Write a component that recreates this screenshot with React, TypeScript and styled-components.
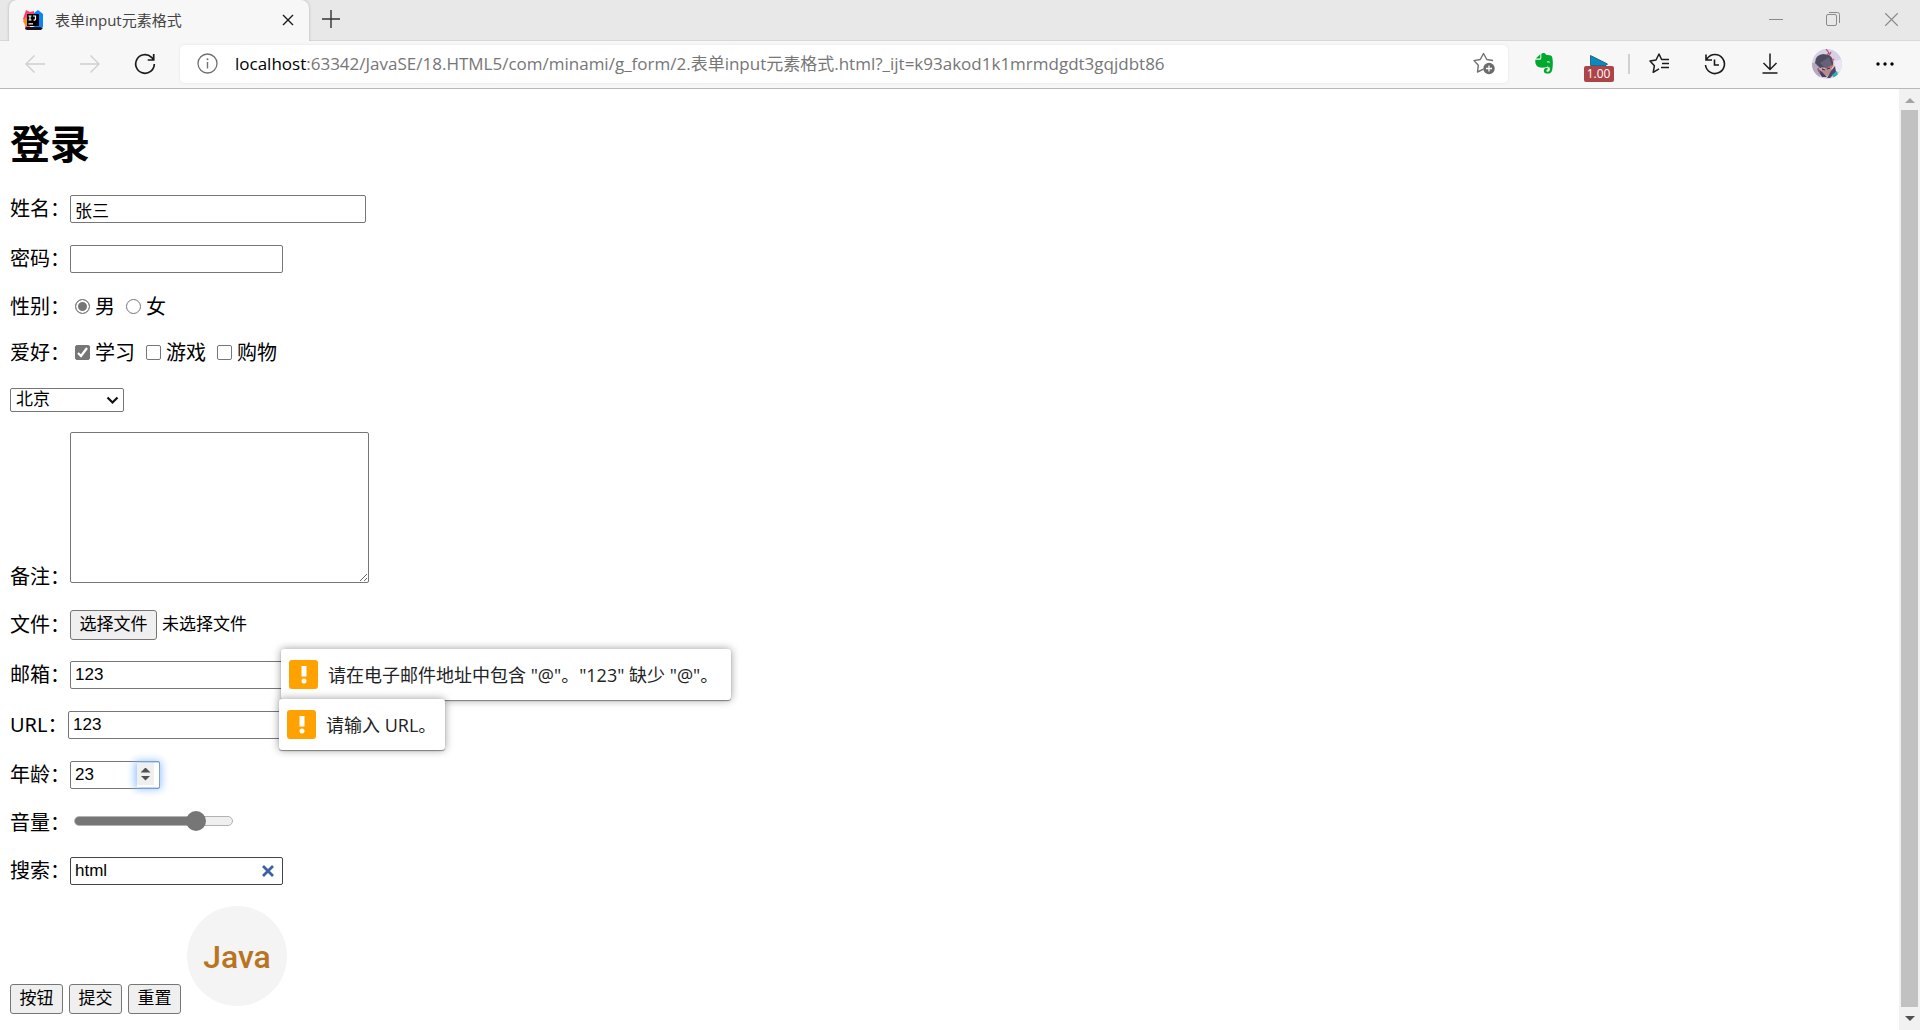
import React, { useRef, useState } from 'react';
import styled, { createGlobalStyle, css } from 'styled-components';

const uiFont = '"Open Sans", "Noto Sans CJK SC", sans-serif';
const cjkFont = '"Noto Sans", "Noto Sans CJK SC", sans-serif';
const fieldFont = '"Liberation Sans", "Noto Sans CJK SC", sans-serif';

const GlobalStyle = createGlobalStyle`
  * { box-sizing: border-box; }
  html, body, #root { height: 100%; }
  body { margin: 0; background: #fff; color: #000; font-family: ${cjkFont}; overflow: hidden; }
  button, input, select, textarea { margin: 0; color: inherit; }
`;

const Browser = styled.div`
  display: flex;
  flex-direction: column;
  height: 100vh;
`;

/* ---------- window chrome ---------- */

const TabStrip = styled.header`
  display: flex;
  flex: none;
  height: 40px;
  padding-left: 9px;
  background: #e8e8e8;
`;

const Tab = styled.div`
  display: flex;
  align-items: center;
  width: 300px;
  height: 41px;
  padding: 0 10px 2px 14px;
  border-radius: 8px 8px 0 0;
  background: #f7f7f7;
  box-shadow: 0 0 3px rgba(0, 0, 0, 0.25);
  clip-path: inset(-4px -4px 0 -4px);
`;

const TabTitle = styled.span`
  flex: 1;
  margin-left: 12px;
  font: 15px/20px ${uiFont};
  color: #444;
  white-space: nowrap;
`;

const IconButton = styled.button<{ $width?: number; $tone?: string }>`
  display: flex;
  flex: none;
  align-items: center;
  justify-content: center;
  width: ${(p) => p.$width ?? 55}px;
  height: 38px;
  padding: 0;
  border: 0;
  background: none;
  color: ${(p) => p.$tone ?? '#1b1b1b'};
  svg { display: block; }
`;

const WindowControls = styled.div`
  display: flex;
  margin-left: auto;
`;

const Toolbar = styled.nav`
  display: flex;
  flex: none;
  align-items: center;
  height: 49px;
  padding: 0 8px 2px 7px;
  border-top: 1px solid #d8d8d8;
  border-bottom: 1px solid #b8b8b8;
  background: #f7f7f7;
`;

const AddressBar = styled.div`
  display: flex;
  flex: 1;
  align-items: center;
  height: 38px;
  margin: 0 8px;
  padding: 0 11px 0 17px;
  border-radius: 5px;
  background: #fff;
  box-shadow: 0 0 3px rgba(0, 0, 0, 0.08);
`;

const Address = styled.span`
  flex: 1;
  margin-left: 17px;
  font: 17px/24px ${uiFont};
  color: #767676;
  white-space: nowrap;
`;

const Host = styled.span`
  color: #000;
`;

const Divider = styled.span`
  width: 2px;
  height: 20px;
  margin: 0 2px;
  background: #d0d0d0;
`;

const SpeedBadge = styled.span`
  display: flex;
  flex-direction: column;
  align-items: center;
  width: 30px;
  margin-top: 9px;
`;

const SpeedValue = styled.span`
  width: 30px;
  border-radius: 2px;
  background: #ac4448;
  color: #fff;
  font: 12px/16px ${uiFont};
  text-align: center;
`;

/* ---------- page ---------- */

const Viewport = styled.div`
  display: flex;
  flex: 1;
  min-height: 0;
`;

const Page = styled.main`
  flex: 1;
  min-width: 0;
  padding: 26px 10px 0;
  overflow: hidden;
`;

const Title = styled.h1`
  margin: 0 0 21px;
  font-size: 40px;
  line-height: 58px;
  font-weight: 700;
`;

const Form = styled.form`
  display: flex;
  flex-direction: column;
  gap: 20px;
`;

const Row = styled.div<{ $height?: number; $end?: boolean }>`
  display: flex;
  align-items: ${(p) => (p.$end ? 'flex-end' : 'center')};
  height: ${(p) => p.$height ?? 30}px;
  font-size: 20px;
  line-height: 26px;
  white-space: nowrap;
`;

const Caption = styled.label<{ $auto?: boolean }>`
  flex: none;
  width: ${(p) => (p.$auto ? '58px' : '60px')};
  overflow: visible;
`;

const box = css`
  border: 1px solid #767676;
  border-radius: 2px;
  background: #fff;
  font: 17px/24px ${fieldFont};
`;

const TextInput = styled.input<{ $width?: number }>`
  ${box}
  width: ${(p) => p.$width ?? 213}px;
  height: 28px;
  padding: 0 4px;
  outline: none;
`;

const Anchor = styled.div`
  position: relative;
  display: flex;
`;

const Choice = styled.label`
  display: flex;
  align-items: center;
  gap: 5px;
  margin: 0 6px 0 5px;
`;

const Radio = styled.input`
  appearance: none;
  width: 15px;
  height: 15px;
  border: 1px solid #767676;
  border-radius: 50%;
  background: #fff;
  &:checked { background: #767676; box-shadow: inset 0 0 0 2px #fff; }
`;

const MarkHolder = styled.span`
  position: relative;
  display: flex;
  margin-bottom: 2px;
  svg { position: absolute; inset: 0; pointer-events: none; }
`;

const Checkbox = styled.input`
  appearance: none;
  width: 15px;
  height: 15px;
  border: 1px solid #767676;
  border-radius: 2px;
  background: #fff;
  &:checked { background: #767676; }
`;

const SelectHolder = styled.div`
  position: relative;
  display: flex;
  svg { position: absolute; right: 5px; top: 8px; pointer-events: none; }
`;

const Select = styled.select`
  ${box}
  appearance: none;
  width: 114px;
  height: 24px;
  padding: 0 5px;
  line-height: 22px;
`;

const Notes = styled.textarea`
  ${box}
  align-self: flex-start;
  width: 299px;
  height: 151px;
  padding: 3px;
  resize: both;
`;

const PushButton = styled.button<{ $width?: number }>`
  ${box}
  width: ${(p) => p.$width ?? 53}px;
  height: 30px;
  padding: 0;
  border-radius: 3px;
  background: #efefef;
`;

const HiddenFile = styled.input`
  display: none;
`;

const FileName = styled.span`
  margin-left: 5px;
  font: 17px/24px ${fieldFont};
`;

const Bubble = styled.div<{ $width: number }>`
  position: absolute;
  left: 211px;
  top: -12px;
  display: flex;
  gap: 10px;
  align-items: center;
  width: ${(p) => p.$width}px;
  height: 51px;
  padding: 0 8px;
  border-radius: 3px;
  background: #fff;
  box-shadow: 0 0 8px rgba(0, 0, 0, 0.4), 0 1px 1px rgba(0, 0, 0, 0.4);
  color: #222;
  font: 18px/24px ${uiFont};
`;

const AlertMark = styled.span`
  display: flex;
  flex: none;
  align-items: center;
  justify-content: center;
  width: 29px;
  height: 29px;
  border-radius: 3px;
  background: #ffa200;
`;

const Composite = styled.div<{ $width: number; $edge?: string }>`
  ${box}
  display: flex;
  align-items: center;
  width: ${(p) => p.$width}px;
  height: 28px;
  padding-left: 4px;
  border-color: ${(p) => p.$edge ?? '#767676'};
`;

const BareInput = styled.input`
  appearance: none;
  flex: 1;
  min-width: 0;
  height: 24px;
  padding: 0;
  border: 0;
  outline: none;
  background: none;
  font: 17px/24px ${fieldFont};
  &[type='number'] { appearance: textfield; }
  &::-webkit-search-cancel-button,
  &::-webkit-inner-spin-button { display: none; }
`;

const SpinnerFrame = styled.span`
  display: flex;
  width: 22px;
  height: 24px;
  background: #fff;
  box-shadow: 0 0 8px 2px #8fc0ff;
`;

const Spinner = styled.span`
  display: flex;
  flex-direction: column;
  align-items: center;
  justify-content: center;
  gap: 3px;
  width: 17px;
  height: 22px;
  background: #efefef;
`;

const Step = styled.button<{ $down?: boolean }>`
  width: 10px;
  height: 5px;
  padding: 0;
  border: 0;
  background: #505050;
  clip-path: ${(p) => (p.$down ? 'polygon(0 0, 100% 0, 50% 100%)' : 'polygon(0 100%, 100% 100%, 50% 0)')};
`;

const Range = styled.input`
  appearance: none;
  width: 159px;
  height: 20px;
  margin: 0 0 4px 4px;
  background: none;
  &::-webkit-slider-runnable-track {
    height: 10px;
    border: 1px solid #b2b2b2;
    border-radius: 5px;
    background: linear-gradient(to right, #767676 var(--fill), #efefef var(--fill));
  }
  &::-webkit-slider-thumb {
    appearance: none;
    width: 20px;
    height: 20px;
    margin-top: -6px;
    border-radius: 50%;
    background: #767676;
  }
`;

const Actions = styled.div`
  display: flex;
  gap: 6px;
  align-items: flex-end;
  height: 108px;
`;

const JavaButton = styled.button`
  align-self: flex-start;
  width: 100px;
  height: 100px;
  padding: 2px 0 0;
  border: 0;
  border-radius: 50%;
  background: #f4f4f4;
  color: #b87420;
  font: 500 32px/40px Roboto, sans-serif;
`;

/* ---------- scroll bar ---------- */

const ScrollTrack = styled.div`
  display: flex;
  flex: none;
  flex-direction: column;
  align-items: center;
  width: 21px;
  background: #f1f1f1;
`;

const ScrollArrow = styled.button<{ $down?: boolean }>`
  display: flex;
  align-items: center;
  justify-content: center;
  width: 21px;
  height: ${(p) => (p.$down ? 23 : 21)}px;
  padding: ${(p) => (p.$down ? '0' : '2px 0 0')};
  border: 0;
  background: none;
`;

const ScrollThumb = styled.div`
  flex: 1;
  width: 17px;
  background: #c1c1c1;
`;

/* ---------- drawings ---------- */

const stroke = { fill: 'none', stroke: 'currentColor', strokeWidth: 1.4 } as const;

const IdeaLogo = () => (
  <svg width="20" height="20" viewBox="0 0 20 20">
    <path d="M3 0l4 2 4-1v10l-6 8H2l1-7-3-3z" fill="#fe3d73" />
    <path d="M0 11l3-4 2 3v5l-2 2z" fill="#fc8a1d" />
    <path d="M11 3l4-3 5 4v13l-4 2-6-3z" fill="#0a84fa" />
    <path d="M3 17h14l3 1-2 2H4l-2-1z" fill="#15121c" />
    <rect x="4" y="4" width="12" height="12" fill="#000" />
    <path d="M5.500 6h3M7 6v4M5.500 10h3M10 6h2.500v3q0 1.200-2 1M5.500 13.800h4.500" fill="none" stroke="#fff" strokeWidth="1.200" />
  </svg>
);

const Cross = ({ size, w = 1.4, color = 'currentColor' }: { size: number; w?: number; color?: string }) => (
  <svg width={size} height={size} viewBox="0 0 12 12">
    <path d="M1 1l10 10M11 1L1 11" fill="none" stroke={color} strokeWidth={w} />
  </svg>
);

const Arrow = ({ flip }: { flip?: boolean }) => (
  <svg width="20" height="18" viewBox="0 0 20 18" transform={flip ? 'scale(-1 1)' : undefined}>
    <path d="M9.500 .5L1 9l8.500 8.500M1 9h19" {...stroke} />
  </svg>
);

const Reload = () => (
  <svg width="22" height="22" viewBox="0 0 22 22">
    <path d="M20.300 11A9.300 9.300 0 1 1 17.500 4.300L19.500 6.500M19.700 1v6h-6" {...stroke} strokeWidth="1.700" />
  </svg>
);

const Info = () => (
  <svg width="21" height="21" viewBox="0 0 21 21">
    <circle cx="10.500" cy="10.500" r="9.500" fill="none" stroke="#707070" strokeWidth="1.300" />
    <path d="M10.500 9v6.500" stroke="#707070" strokeWidth="1.400" />
    <circle cx="10.500" cy="6.300" r="1" fill="#707070" />
  </svg>
);

const StarAdd = () => (
  <svg width="23" height="23" viewBox="0 0 23 23">
    <path d="M10.500 17.200L4.500 20l.8-6.700L1 8.600l6.200-1.100L10.500 1.500l3.300 6 6.200 1" fill="none" stroke="#707070" strokeWidth="1.400" strokeLinejoin="round" />
    <circle cx="16" cy="16.500" r="5.700" fill="#6b6b6b" />
    <path d="M16 13.500v6M13 16.500h6" stroke="#fff" strokeWidth="1.300" />
  </svg>
);

const Elephant = () => (
  <svg width="18" height="21" viewBox="0 0 18 21">
    <path d="M5.300 1.200L.8 5.600h3.500q1 0 1-1z" fill="#00a82d" />
    <path d="M6.300 .8c2-1.300 4.200-.6 4.700.9 2 .2 5 .3 5.800 1.500C18.200 6 18 13 17.200 17c-.7 2.800-2 3.600-4.500 3.600-2.600 0-3.900-1-3.900-2.900s1.200-2.900 3.900-2.900v1.800c-1.700 0-1.700 2.100 0 2.100 2 0 2.300-1.500 2-4.200-.9.300-1.600-.3-2.200-1.200-.8 1-2 1.300-3.500 1.300-4 .2-6.400-.3-7.500-2C.3 10.600 0 9 .4 6.800h4.400q1.500 0 1.500-1.500z" fill="#00a82d" />
    <path d="M11.800 9.500q.4-2 2.400-1 .8.500.7 1.300-1.500-.8-3.100-.3z" fill="#f7f7f7" />
  </svg>
);

const StarList = () => (
  <svg width="21" height="21" viewBox="0 0 21 21">
    <path d="M10 15.800L4.200 19.300l1.200-6.600L1 8l6-1L10 1l2.600 5.500H20M13 10.500h7M12 14.500h8" {...stroke} strokeWidth="1.500" strokeLinejoin="round" />
  </svg>
);

const History = () => (
  <svg width="22" height="22" viewBox="0 0 22 22">
    <path d="M1.500 12A9.500 9.500 0 1 0 3.300 5.400L2 7M2 1.500V7h6M10.500 6.500V12H15" {...stroke} strokeWidth="1.600" />
  </svg>
);

const Download = () => (
  <svg width="16" height="21" viewBox="0 0 16 21">
    <path d="M8 .5V16M1.500 10L8 16.500 14.500 10M.5 20h15" {...stroke} strokeWidth="1.500" />
  </svg>
);

const Avatar = () => (
  <svg width="30" height="30" viewBox="0 0 30 30">
    <defs><clipPath id="face"><circle cx="15" cy="15" r="15" /></clipPath></defs>
    <g clipPath="url(#face)">
      <rect width="30" height="30" fill="#d6cfe6" />
      <path d="M0 14l6-1 4 9-3 8H0z" fill="#b7a9bd" />
      <path d="M22 12l8-2v12l-6 2z" fill="#eae6f4" />
      <path d="M3 14Q3 6 11 5l6 1q5 3 4 10l-5 2-8 1z" fill="#4e4b60" />
      <path d="M8 14l9-6 3 8-4 6z" fill="#656178" />
      <path d="M9 18l4 2 6-3 1 6-5 4-5-3z" fill="#b98b86" />
      <path d="M10 20l3 1M15 20l3-1" stroke="#3a2c44" strokeWidth="1" />
      <path d="M5 20l4 2 6 6h-5z" fill="#493b63" />
      <path d="M19 22l4-5 1 6-6 6h-3z" fill="#4d456c" />
      <path d="M14 0l3 4-2 2M19 3l-2 4M6 19l2 5" fill="none" stroke="#b1546b" strokeWidth="1.200" />
      <path d="M20 12l2-2M19 19l2-3" stroke="#ec5a42" strokeWidth="1.300" />
      <path d="M20 26l5-4 1 4-4 3z" fill="#27b3ad" />
    </g>
  </svg>
);

const Exclaim = () => (
  <svg width="6" height="18" viewBox="0 0 6 18">
    <rect x=".5" y="0" width="5" height="10.500" fill="#fff" />
    <circle cx="3" cy="15" r="2.500" fill="#fff" />
  </svg>
);

/* ---------- application ---------- */

const hobbies = ['学习', '游戏', '购物'];

export default function App() {
  const fileRef = useRef<HTMLInputElement>(null);
  const [volume, setVolume] = useState(81);
  const [age, setAge] = useState(23);
  const [search, setSearch] = useState('html');
  const [picked, setPicked] = useState<string[]>(['学习']);

  const toggle = (name: string) =>
    setPicked((list) => (list.includes(name) ? list.filter((n) => n !== name) : [...list, name]));

  return (
    <Browser>
      <GlobalStyle />
      <TabStrip>
        <Tab>
          <IdeaLogo />
          <TabTitle>表单input元素格式</TabTitle>
          <IconButton $width={22} aria-label="关闭标签页"><Cross size={12} /></IconButton>
        </Tab>
        <IconButton $width={44} $tone="#333" aria-label="新建标签页">
          <svg width="18" height="18" viewBox="0 0 18 18"><path d="M9 0v18M0 9h18" {...stroke} /></svg>
        </IconButton>
        <WindowControls>
          <IconButton $width={57} $tone="#8a8a8a" aria-label="最小化">
            <svg width="14" height="14" viewBox="0 0 14 14"><path d="M0 7.500h14" {...stroke} strokeWidth="1" /></svg>
          </IconButton>
          <IconButton $width={58} $tone="#8a8a8a" aria-label="还原">
            <svg width="14" height="14" viewBox="0 0 14 14">
              <rect x=".5" y="2.500" width="10" height="11" rx="1.500" {...stroke} strokeWidth="1" />
              <path d="M3 .5h8.500q2 0 2 2V11" {...stroke} strokeWidth="1" />
            </svg>
          </IconButton>
          <IconButton $width={58} $tone="#8a8a8a" aria-label="关闭"><Cross size={15} w={0.9} /></IconButton>
        </WindowControls>
      </TabStrip>

      <Toolbar>
        <IconButton $tone="#cfcfcf" aria-label="后退"><Arrow /></IconButton>
        <IconButton $tone="#cfcfcf" aria-label="前进"><Arrow flip /></IconButton>
        <IconButton aria-label="刷新"><Reload /></IconButton>
        <AddressBar>
          <Info />
          <Address><Host>localhost</Host>:63342/JavaSE/18.HTML5/com/minami/g_form/2.表单input元素格式.html?_ijt=k93akod1k1mrmdgdt3gqjdbt86</Address>
          <IconButton $width={26} aria-label="收藏"><StarAdd /></IconButton>
        </AddressBar>
        <IconButton aria-label="剪藏"><Elephant /></IconButton>
        <IconButton aria-label="播放速度">
          <SpeedBadge>
            <svg width="18" height="11" viewBox="0 0 18 11"><path d="M.5 .5L17.500 9 16 10.500H.5z" fill="#0a8ac2" stroke="#174f6c" strokeWidth=".8" /></svg>
            <SpeedValue>1.00</SpeedValue>
          </SpeedBadge>
        </IconButton>
        <Divider />
        <IconButton aria-label="收藏夹"><StarList /></IconButton>
        <IconButton aria-label="历史记录"><History /></IconButton>
        <IconButton aria-label="下载"><Download /></IconButton>
        <IconButton $width={60} aria-label="个人资料"><Avatar /></IconButton>
        <IconButton aria-label="更多">
          <svg width="18" height="4" viewBox="0 0 18 4"><circle cx="2" cy="2" r="1.700" /><circle cx="9" cy="2" r="1.700" /><circle cx="16" cy="2" r="1.700" /></svg>
        </IconButton>
      </Toolbar>

      <Viewport>
        <Page>
          <Title>登录</Title>
          <Form noValidate onSubmit={(e) => e.preventDefault()}>
            <Row>
              <Caption htmlFor="name">姓名：</Caption>
              <TextInput id="name" $width={296} defaultValue="张三" />
            </Row>
            <Row>
              <Caption htmlFor="password">密码：</Caption>
              <TextInput id="password" type="password" />
            </Row>
            <Row $height={26}>
              <Caption as="span">性别：</Caption>
              <Choice><MarkHolder><Radio type="radio" name="sex" defaultChecked /></MarkHolder>男</Choice>
              <Choice><MarkHolder><Radio type="radio" name="sex" /></MarkHolder>女</Choice>
            </Row>
            <Row $height={26}>
              <Caption as="span">爱好：</Caption>
              {hobbies.map((name) => (
                <Choice key={name}>
                  <MarkHolder>
                    <Checkbox type="checkbox" checked={picked.includes(name)} onChange={() => toggle(name)} />
                    {picked.includes(name) && (
                      <svg width="15" height="15" viewBox="0 0 15 15"><path d="M3 8l3 3 6-8" fill="none" stroke="#fff" strokeWidth="2.200" /></svg>
                    )}
                  </MarkHolder>
                  {name}
                </Choice>
              ))}
            </Row>
            <Row $height={26} $end>
              <SelectHolder>
                <Select aria-label="城市" defaultValue="北京"><option>北京</option><option>上海</option></Select>
                <svg width="13" height="9" viewBox="0 0 13 9"><path d="M1.500 1.500l5 5 5-5" fill="none" stroke="#111" strokeWidth="2.200" /></svg>
              </SelectHolder>
            </Row>
            <Row $height={158} $end>
              <Caption htmlFor="notes">备注：</Caption>
              <Notes id="notes" />
            </Row>
            <Row>
              <Caption htmlFor="file">文件：</Caption>
              <HiddenFile id="file" type="file" ref={fileRef} />
              <PushButton type="button" $width={87} onClick={() => fileRef.current?.click()}>选择文件</PushButton>
              <FileName>未选择文件</FileName>
            </Row>
            <Row>
              <Caption htmlFor="mail">邮箱：</Caption>
              <Anchor>
                <TextInput id="mail" type="email" defaultValue="123" />
                <Bubble $width={450} role="alert">
                  <AlertMark><Exclaim /></AlertMark>
                  请在电子邮件地址中包含 "@"。"123" 缺少 "@"。
                </Bubble>
              </Anchor>
            </Row>
            <Row>
              <Caption htmlFor="url" $auto>URL：</Caption>
              <Anchor>
                <TextInput id="url" type="url" defaultValue="123" />
                <Bubble $width={166} role="alert">
                  <AlertMark><Exclaim /></AlertMark>
                  请输入 URL。
                </Bubble>
              </Anchor>
            </Row>
            <Row>
              <Caption htmlFor="age">年龄：</Caption>
              <Composite $width={90}>
                <BareInput id="age" type="number" value={age} onChange={(e) => setAge(Number(e.target.value))} />
                <SpinnerFrame>
                  <Spinner>
                    <Step type="button" aria-label="增加" onClick={() => setAge(age + 1)} />
                    <Step type="button" aria-label="减少" $down onClick={() => setAge(age - 1)} />
                  </Spinner>
                </SpinnerFrame>
              </Composite>
            </Row>
            <Row $height={26}>
              <Caption htmlFor="volume">音量：</Caption>
              <Range
                id="volume"
                type="range"
                value={volume}
                onChange={(e) => setVolume(Number(e.target.value))}
                style={{ '--fill': `${volume}%` } as React.CSSProperties}
              />
            </Row>
            <Row>
              <Caption htmlFor="search">搜索：</Caption>
              <Composite $width={213} $edge="#444">
                <BareInput id="search" type="search" value={search} onChange={(e) => setSearch(e.target.value)} />
                <IconButton type="button" $width={28} aria-label="清除" onClick={() => setSearch('')}>
                  <Cross size={12} w={2.8} color="#3c62a6" />
                </IconButton>
              </Composite>
            </Row>
            <Actions>
              <PushButton type="button">按钮</PushButton>
              <PushButton type="submit">提交</PushButton>
              <PushButton type="reset">重置</PushButton>
              <JavaButton type="submit">Java</JavaButton>
            </Actions>
          </Form>
        </Page>
        <ScrollTrack>
          <ScrollArrow aria-label="向上滚动">
            <svg width="10" height="5" viewBox="0 0 10 5"><path d="M0 5l5-5 5 5z" fill="#a3a3a3" /></svg>
          </ScrollArrow>
          <ScrollThumb />
          <ScrollArrow $down aria-label="向下滚动">
            <svg width="10" height="5" viewBox="0 0 10 5"><path d="M0 0l5 5 5-5z" fill="#505050" /></svg>
          </ScrollArrow>
        </ScrollTrack>
      </Viewport>
    </Browser>
  );
}
